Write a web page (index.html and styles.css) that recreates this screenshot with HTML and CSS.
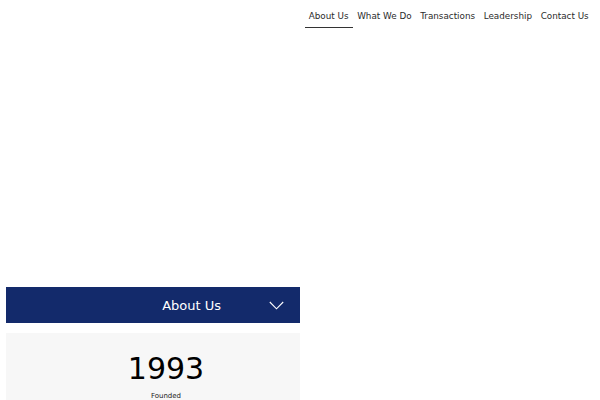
FILE: index.html
```html
<!DOCTYPE html>
<html>
<head>
<meta charset="utf-8">
<link rel="stylesheet" href="styles.css">
</head>
<body>
<header class="top">
  <nav class="nav">
    <a class="nav-item active">About Us</a>
    <a class="nav-item">What We Do</a>
    <a class="nav-item">Transactions</a>
    <a class="nav-item">Leadership</a>
    <a class="nav-item">Contact Us</a>
  </nav>
</header>
<main class="main">
  <section class="panel">
    <div class="bar">
      <span class="bar-title">About Us</span>
      <svg class="chev" width="15" height="9" viewBox="0 0 15 9"><path d="M0.8 1 L7.5 7.8 L14.2 1" fill="none" stroke="#fff" stroke-width="1.1"/></svg>
    </div>
    <div class="stat">
      <div class="stat-num">1993</div>
      <div class="stat-label">Founded</div>
    </div>
  </section>
</main>
</body>
</html>
```
FILE: styles.css
```css
html, body { margin: 0; padding: 0; background: #fff; }
body { font-family: "DejaVu Sans", sans-serif; width: 600px; height: 400px; overflow: hidden; }
.top { display: flex; justify-content: flex-end; padding: 9px 7px 0 0; }
.nav { display: flex; }
.nav-item { font-size: 8.8px; color: #2b2b2b; padding: 2px 4px 6px; border-bottom: 1px solid transparent; margin: 0 0.3px; }
.nav-item.active { border-bottom-color: #333; }
.main { padding: 259px 0 0 6px; }
.panel { width: 294px; }
.bar { background: #132a6b; height: 36px; display: flex; align-items: center; justify-content: flex-end; padding-right: 16px; }
.bar-title { color: #fff; font-size: 13px; margin-right: 48px; }
.chev { display: block; margin-top: 1px; }
.stat { background: #f7f7f7; margin-top: 10px; height: 80px; display: flex; flex-direction: column; align-items: center; padding: 19px 0 0 26px; box-sizing: border-box; }
.stat-num { font-size: 30px; line-height: 34px; color: #000; }
.stat-label { font-size: 7px; line-height: 9px; color: #222; margin-top: 6px; }
```
